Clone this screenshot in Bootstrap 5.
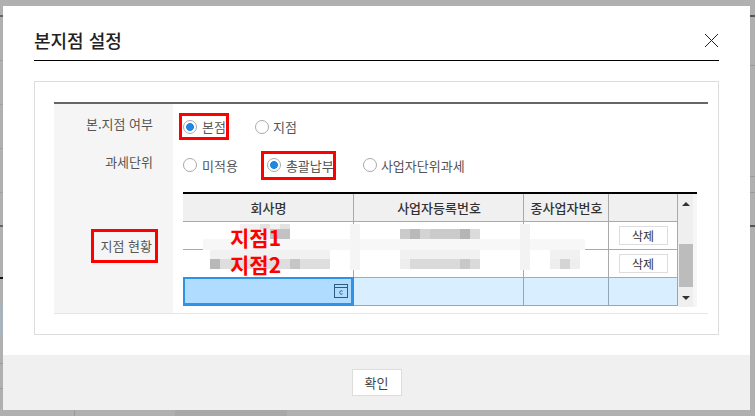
<!DOCTYPE html>
<html lang="ko">
<head>
<meta charset="utf-8">
<title>본지점 설정</title>
<link rel="stylesheet" href="https://cdn.jsdelivr.net/npm/bootstrap@5.3.0/dist/css/bootstrap.min.css">
<style>
html,body{height:416px;overflow:hidden}
body{font-family:"Noto Sans CJK KR","Liberation Sans",sans-serif;font-size:13px;color:#555;padding:6px 5px 6px 3px;
background-color:#b0b0b0;background-repeat:no-repeat;
background-image:
linear-gradient(#666,#666),linear-gradient(#a0a0a0,#a0a0a0),linear-gradient(#a0a0a0,#a0a0a0),linear-gradient(#a0a0a0,#a0a0a0),linear-gradient(#a0a0a0,#a0a0a0),linear-gradient(#666,#666),linear-gradient(#111,#111),linear-gradient(#a7b4be,#a7b4be),linear-gradient(#999,#999),linear-gradient(#999,#999),
linear-gradient(#555,#555),linear-gradient(#999,#999),linear-gradient(#999,#999),linear-gradient(#999,#999),linear-gradient(#555,#555),
linear-gradient(#999,#999),linear-gradient(#a8a8a8,#a8a8a8);
background-size:3px 2px,3px 1px,3px 1px,3px 1px,3px 1px,3px 2px,3px 2px,3px 29px,3px 1px,3px 1px,
5px 2px,5px 1px,5px 1px,5px 1px,5px 2px,
1px 6px,112px 6px;
background-position:0 15px,0 60px,0 104px,0 148px,0 192px,0 225px,0 277px,0 306px,0 363px,0 388px,
750px 15px,750px 65px,750px 176px,750px 192px,750px 225px,
74px 410px,175px 410px}
.dlg{height:404px;background:#fff;display:flex;flex-direction:column}
.dlg-main{flex:1;padding:0 31px;min-height:0}
.dlg-head{height:55px;border-bottom:1px solid #000;display:flex;justify-content:space-between;align-items:center;padding-top:14px}
.dlg-title{font-size:18px;font-weight:500;color:#222;margin:0;line-height:1}
.dlg-x{background:none;border:0;padding:0;width:15px;height:15px;display:flex}
.outer-box{margin-top:20px;height:254px;border:1px solid #ddd;padding:20px 10px 20px 19px}
.form-area{border-top:2px solid #666;border-bottom:1px solid #e6e6e6;height:212px;display:flex;flex-direction:column}
.f-row{display:flex}
.f-r1{height:39px}.f-r2{height:38px}.f-r3{flex:1}
.f-lab{width:119px;flex:none;background:#f5f5f5;display:flex;align-items:center;justify-content:flex-end;padding-right:20px;color:#555}
.f-r3 .f-lab{padding-bottom:2px;padding-right:15px}
.f-val{flex:1;padding-left:10px;display:flex;align-items:center}
.red-box{border:3px solid #f00}
.lab-box{width:67px;height:34px;display:flex;align-items:center;justify-content:flex-end;padding-right:3px}
.rad{display:inline-flex;align-items:center;gap:5px;margin:0;color:#555;line-height:1;white-space:nowrap}
.rad .form-check-input{width:14px;height:14px;margin:0;flex:none;border:1px solid #aaa;background-color:#fff;background-image:none;box-shadow:none}
.rad .form-check-input:checked{background-color:#fff;border-color:#aaa;background-image:radial-gradient(circle,#1e88e5 0,#1e88e5 3.6px,#fff 4.2px)}
.f-r1 .f-val{padding-left:6px;padding-top:6px}
.f-r1 .red-box{width:50px;height:27px;padding-left:1px}
.f-r1 .plain{margin-left:26px;gap:4px}
.f-r2 .f-val{padding-left:10px;padding-top:6px}
.f-r2 .red-box{width:75px;height:29px;margin-left:23px;padding-left:3px}
.f-r2 .plain3{margin-left:27px;gap:4px}
.f-r3 .f-val{display:block;padding-top:11px}
.grid-wrap{position:relative;width:514px;display:flex;border-top:2px solid #000;height:116px}
.grid-tbl{width:495px;table-layout:fixed;border-collapse:separate;border-spacing:0;margin:0;font-size:13px;color:#333;align-self:flex-start}
.grid-tbl th,.grid-tbl td{padding:0;text-align:center;vertical-align:middle;border:0;border-right:1px solid #a9a9a9;border-bottom:1px solid #a9a9a9;line-height:1;color:#333}
.grid-tbl thead th{height:28px;background:#f0f0f0;font-weight:500;padding-left:1px}
.grid-tbl tbody td{height:28px;background:#fff}
.grid-tbl tbody tr.sel td{background:#d9eeff;border-color:#8fa9b8}
.grid-tbl tbody tr.sel td.cur{background:#b0dcff;box-shadow:0 -1px 0 #2f92e6,inset 0 1px 0 #2f92e6,inset 2px 0 0 #2f92e6,inset -2px 0 0 #2f92e6,inset 0 -2px 0 #2f92e6;border-right-color:#2f92e6;border-bottom-color:#2f92e6;position:relative}
.cal{position:absolute;right:5px;top:6px;display:block}
.del-btn{width:49px;height:19px;padding:0;border:1px solid #ddd;background:#fff;font-size:12px;line-height:1;color:#333;border-radius:0}
.scr{width:19px;height:113px;background:#efefef;border-right:4px solid #f6f6f6;position:relative;flex:none}
.thumb{position:absolute;left:1px;right:0;top:50px;height:43px;background:#bcbcbc}
.arr{position:absolute;left:4px;width:0;height:0;border-left:4px solid transparent;border-right:4px solid transparent}
.arr.up{top:8px;border-bottom:4px solid #333}
.arr.dn{top:102px;border-top:4px solid #333}
.mosaic{position:absolute;left:0;top:0;width:495px;height:112px;pointer-events:none}
.site{position:absolute;left:47px;font-size:21px;line-height:1;font-weight:700;color:#f00;white-space:nowrap}
.s1{top:33px}.s2{top:60px}
.dlg-foot{height:55px;background:#f0f0f0;display:flex;align-items:center;justify-content:center;padding-bottom:1px}
.ok-btn{width:50px;height:27px;padding:0;background:#fff;border:1px solid #ddd;border-radius:0;font-size:13px;color:#444;line-height:1}
.ok-btn:hover,.del-btn:hover{background:#fff}
</style>
</head>
<body>
<div class="dlg">
  <div class="dlg-main">
    <div class="dlg-head">
      <h5 class="dlg-title">본지점 설정</h5>
      <button type="button" class="dlg-x" aria-label="닫기"><svg width="15" height="15" viewBox="0 0 15 15"><path d="M1 1L14 14M14 1L1 14" stroke="#222" stroke-width="1" fill="none"/></svg></button>
    </div>
    <div class="outer-box">
      <div class="form-area">
        <div class="f-row f-r1">
          <div class="f-lab">본.지점 여부</div>
          <div class="f-val">
            <label class="rad red-box"><input class="form-check-input" type="radio" name="a" checked>본점</label>
            <label class="rad plain"><input class="form-check-input" type="radio" name="a">지점</label>
          </div>
        </div>
        <div class="f-row f-r2">
          <div class="f-lab">과세단위</div>
          <div class="f-val">
            <label class="rad"><input class="form-check-input" type="radio" name="b">미적용</label>
            <label class="rad red-box"><input class="form-check-input" type="radio" name="b" checked>총괄납부</label>
            <label class="rad plain3"><input class="form-check-input" type="radio" name="b">사업자단위과세</label>
          </div>
        </div>
        <div class="f-row f-r3">
          <div class="f-lab"><div class="red-box lab-box">지점 현황</div></div>
          <div class="f-val">
            <div class="grid-wrap">
              <table class="grid-tbl">
                <colgroup><col style="width:171px"><col style="width:170px"><col style="width:85px"><col style="width:69px"></colgroup>
                <thead><tr><th>회사명</th><th>사업자등록번호</th><th>종사업자번호</th><th></th></tr></thead>
                <tbody>
                  <tr><td></td><td></td><td></td><td><button type="button" class="btn del-btn">삭제</button></td></tr>
                  <tr><td></td><td></td><td></td><td><button type="button" class="btn del-btn">삭제</button></td></tr>
                  <tr class="sel"><td class="cur"><svg class="cal" width="14" height="14" viewBox="0 0 14 14"><rect x=".5" y=".5" width="13" height="13" fill="none" stroke="#2d5a80"/><path d="M1 3.5H13" stroke="#2d5a80"/><path d="M8.5 7.2A1.7 1.7 0 1 0 8.5 9.8" stroke="#2d5a80" fill="none"/></svg></td><td></td><td></td><td></td></tr>
                </tbody>
              </table>
              <svg class="mosaic" viewBox="183 194 495 112" aria-hidden="true">
                <rect x="203" y="239" width="382" height="11" fill="#f7f7f7"/>
                <rect x="520" y="224" width="10" height="46" fill="#f3f3f3"/>
                <rect x="350" y="224" width="10" height="46" fill="#f5f5f5"/>
                <g fill="#f1f1f1"><rect x="240" y="224" width="50" height="5"/><rect x="210" y="250" width="120" height="9"/><rect x="550" y="250" width="30" height="9"/><rect x="400" y="250" width="80" height="9"/><rect x="240" y="229" width="30" height="10"/></g>
                <g fill="#e2e2e2"><rect x="260" y="224" width="10" height="5"/><rect x="280" y="224" width="10" height="5"/></g>
                <rect x="270" y="229" width="20" height="10" fill="#c2c2c2"/>
                <rect x="400" y="229" width="80" height="10" fill="#cbcbcb"/>
                <rect x="410" y="229" width="10" height="10" fill="#b9b9b9"/>
                <rect x="420" y="229" width="10" height="10" fill="#d4d4d4"/>
                <rect x="460" y="229" width="10" height="10" fill="#b5b5b5"/>
                <rect x="470" y="229" width="10" height="10" fill="#dbdbdb"/>
                <rect x="210" y="259" width="120" height="10" fill="#dedede"/>
                <rect x="210" y="259" width="10" height="10" fill="#b8b8b8"/>
                <rect x="290" y="259" width="10" height="10" fill="#c6c6c6"/>
                <rect x="400" y="259" width="80" height="10" fill="#dadada"/>
                <rect x="400" y="259" width="10" height="10" fill="#eeeeee"/>
                <rect x="460" y="259" width="10" height="10" fill="#c8c8c8"/>
                <rect x="550" y="259" width="30" height="10" fill="#eeeeee"/>
                <rect x="560" y="259" width="10" height="10" fill="#d4d4d4"/>
              </svg>
              <div class="site s1">지점1</div>
              <div class="site s2">지점2</div>
              <div class="scr"><span class="arr up"></span><span class="thumb"></span><span class="arr dn"></span></div>
            </div>
          </div>
        </div>
      </div>
    </div>
  </div>
  <div class="dlg-foot"><button type="button" class="btn ok-btn">확인</button></div>
</div>
<script src="https://cdn.jsdelivr.net/npm/bootstrap@5.3.0/dist/js/bootstrap.bundle.min.js"></script>
</body>
</html>
